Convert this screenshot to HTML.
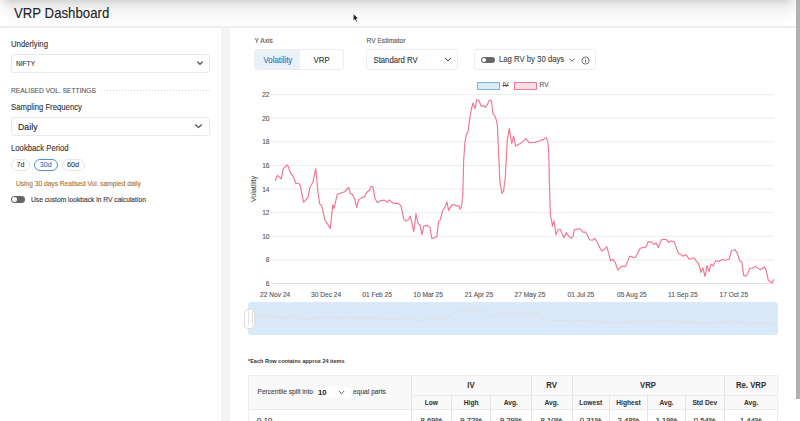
<!DOCTYPE html>
<html><head><meta charset="utf-8"><title>VRP Dashboard</title>
<style>
*{box-sizing:border-box;margin:0;padding:0}
html,body{width:800px;height:421px;overflow:hidden;background:#fff}
body{font-family:"Liberation Sans",sans-serif;color:#333;position:relative;-webkit-text-stroke:0.1px currentColor}
.a{position:absolute;white-space:nowrap}
#hdr{position:absolute;left:0;top:0;width:796px;height:27.5px;background:linear-gradient(#d7d7d7 0px,#dcdcdc 1.5px,#e2e2e5 3px,#e9e9e9 5px,#f0f0f0 8px,#f6f6f6 12px,#fbfbfb 17px,#fdfdfd 22px,#fdfdfd 25px);border-bottom:2px solid #ededed}
#vig{position:absolute;left:0;top:0;width:796px;height:26px;background:radial-gradient(ellipse 14px 24px at 0 26px,rgba(255,255,255,0.95),rgba(255,255,255,0) 100%),linear-gradient(to right,rgba(255,255,255,0.7),rgba(255,255,255,0) 10px,rgba(255,255,255,0) 784px,rgba(255,255,255,0.6))}
#title{left:14px;top:4.6px;font-size:13.22px;color:#222;transform:scaleY(1.075);transform-origin:0 0}
#gutter{position:absolute;left:221px;top:27px;width:8.5px;height:394px;background:#f3f3f3}
#sb{position:absolute;left:796px;top:0;width:4px;height:399px;background:#b1b1b1}
.lbl{font-size:7.74px;color:#333;transform:scaleY(1.05);transform-origin:0 72%}
.sel{position:absolute;border:1px solid #e9e9e9;border-radius:3px;background:#fff}
.chev{position:absolute}
.chip{position:absolute;border:1px solid #e6e6e6;border-radius:7px;font-size:7.2px;color:#333;text-align:center;line-height:10.5px;height:12px}
.yl{position:absolute;left:252px;width:17.5px;text-align:right;font-size:6.6px;color:#555;line-height:9px;transform:scaleY(1.05);transform-origin:0 72%}
.xl{position:absolute;top:289.5px;width:60px;text-align:center;font-size:6.62px;color:#555;line-height:9px;transform:scaleY(1.05);transform-origin:0 72%}
table{position:absolute;left:248px;top:375px;width:530px;border-collapse:collapse;font-size:6.6px}
td,th{border:1px solid #ebebeb}
th{background:#f9f9f9;font-weight:700;color:#333}
</style></head><body>
<div id="hdr"></div><div id="vig"></div>
<div class="a" id="title">VRP Dashboard</div>
<div id="sb"></div>
<div id="gutter"></div>

<!-- sidebar -->
<div class="a lbl" style="left:11px;top:39.6px">Underlying</div>
<div class="sel" style="left:11px;top:54px;width:199px;height:19px"></div>
<div class="a" style="left:16px;top:59.5px;font-size:6.6px;color:#333;transform:scaleY(1.05);transform-origin:0 72%">NIFTY</div>
<svg class="chev" style="left:196px;top:60px" width="8" height="6" viewBox="0 0 8 6"><path d="M1.2 1.6 L4 4.3 L6.8 1.6" fill="none" stroke="#555" stroke-width="1.3"/></svg>
<div class="a" style="left:11px;top:86.5px;font-size:6.65px;color:#555;transform:scaleY(1.05);transform-origin:0 72%">REALISED VOL. SETTINGS</div>
<div class="a" style="left:100.5px;top:89.5px;width:109px;height:1px;background:repeating-linear-gradient(to right,#d4d4d4 0,#d4d4d4 1px,transparent 1px,transparent 3px)"></div>
<div class="a lbl" style="left:11px;top:102.5px">Sampling Frequency</div>
<div class="sel" style="left:11px;top:117px;width:199px;height:19px"></div>
<div class="a" style="left:18px;top:121.5px;font-size:8.8px;color:#222;transform:scaleY(1.05);transform-origin:0 72%">Daily</div>
<svg class="chev" style="left:194px;top:123px" width="9" height="6" viewBox="0 0 9 6"><path d="M1.2 1.4 L4.5 4.4 L7.8 1.4" fill="none" stroke="#555" stroke-width="1.3"/></svg>
<div class="a lbl" style="left:11px;top:143.5px">Lookback Period</div>
<div class="chip" style="left:11px;top:158.5px;width:19px">7d</div>
<div class="chip" style="left:34px;top:158.5px;width:23.5px;border-color:#4a8fd8;color:#2f6fc0">30d</div>
<div class="chip" style="left:61.5px;top:158.5px;width:23px">60d</div>
<div class="a" style="left:16px;top:179.8px;font-size:6.63px;color:#a86f2c;transform:scaleY(1.05);transform-origin:0 72%">Using 30 days Realised Vol. sampled daily</div>
<div class="a" style="left:11px;top:196px;width:13.5px;height:7px;border-radius:4px;background:#666"></div>
<div class="a" style="left:12.2px;top:197.2px;width:4.6px;height:4.6px;border-radius:50%;background:#fff"></div>
<div class="a" style="left:31px;top:195.7px;font-size:6.68px;color:#333;transform:scaleY(1.05);transform-origin:0 72%">Use custom lookback in RV calculation</div>

<!-- controls -->
<div class="a" style="left:254.5px;top:36.5px;font-size:6.64px;color:#555;transform:scaleY(1.05);transform-origin:0 72%">Y Axis</div>
<div class="sel" style="left:254px;top:49px;width:90px;height:21px;border-color:#ececec"></div>
<div class="a" style="left:255px;top:50px;width:45px;height:19px;background:#eaf1f9;border-radius:2px 0 0 2px"></div>
<div class="a" style="left:263.5px;top:55.5px;font-size:7.85px;color:#2f6fc0;transform:scaleY(1.05);transform-origin:0 72%">Volatility</div>
<div class="a" style="left:313.5px;top:55.5px;font-size:7.85px;color:#333;transform:scaleY(1.05);transform-origin:0 72%">VRP</div>
<div class="a" style="left:366.5px;top:36.5px;font-size:6.64px;color:#555;transform:scaleY(1.05);transform-origin:0 72%">RV Estimator</div>
<div class="sel" style="left:366px;top:49px;width:92px;height:21px;border-color:#ececec"></div>
<div class="a" style="left:373.5px;top:55.5px;font-size:7.74px;color:#333;transform:scaleY(1.05);transform-origin:0 72%">Standard RV</div>
<svg class="chev" style="left:444px;top:57px" width="8" height="5" viewBox="0 0 8 5"><path d="M1 1 L4 4 L7 1" fill="none" stroke="#444" stroke-width="1"/></svg>
<div class="sel" style="left:474px;top:49.3px;width:122px;height:21px;border-color:#ececec"></div>
<div class="a" style="left:481px;top:57px;width:13.5px;height:6px;border-radius:3px;background:#666"></div>
<div class="a" style="left:482px;top:58px;width:4px;height:4px;border-radius:50%;background:#fff"></div>
<div class="a" style="left:499px;top:55.3px;font-size:7.74px;color:#444;transform:scaleY(1.05);transform-origin:0 72%">Lag RV by 30 days</div>
<svg class="chev" style="left:568.5px;top:57.5px" width="6" height="4" viewBox="0 0 6 4"><path d="M0.5 0.8 L3 3.2 L5.5 0.8" fill="none" stroke="#444" stroke-width="0.9"/></svg>
<svg class="chev" style="left:580.5px;top:55.5px" width="9" height="9" viewBox="0 0 9 9"><circle cx="4.5" cy="4.5" r="3.6" fill="none" stroke="#555" stroke-width="0.8"/><line x1="4.5" y1="3.9" x2="4.5" y2="6.5" stroke="#555" stroke-width="0.9"/><circle cx="4.5" cy="2.7" r="0.5" fill="#555"/></svg>

<!-- legend -->
<div class="a" style="left:477px;top:82px;width:23px;height:7.5px;border:1px solid #79b6dc;background:#dbeaf7"></div>
<div class="a" style="left:502.5px;top:80.5px;font-size:6.6px;color:#555;text-decoration:line-through;transform:scaleY(1.05);transform-origin:0 72%">IV</div>
<div class="a" style="left:513.5px;top:82px;width:23.5px;height:7.5px;border:1px solid #f27a95;background:#fde0e7"></div>
<div class="a" style="left:539.5px;top:80.5px;font-size:6.6px;color:#555;transform:scaleY(1.05);transform-origin:0 72%">RV</div>

<!-- chart -->
<svg class="a" style="left:0;top:0" width="800" height="421">
<line x1="271" y1="94.60" x2="774" y2="94.60" stroke="#ececec" stroke-width="1"/><line x1="271" y1="118.21" x2="774" y2="118.21" stroke="#ececec" stroke-width="1"/><line x1="271" y1="141.82" x2="774" y2="141.82" stroke="#ececec" stroke-width="1"/><line x1="271" y1="165.44" x2="774" y2="165.44" stroke="#ececec" stroke-width="1"/><line x1="271" y1="189.05" x2="774" y2="189.05" stroke="#ececec" stroke-width="1"/><line x1="271" y1="212.66" x2="774" y2="212.66" stroke="#ececec" stroke-width="1"/><line x1="271" y1="236.28" x2="774" y2="236.28" stroke="#ececec" stroke-width="1"/><line x1="271" y1="259.89" x2="774" y2="259.89" stroke="#ececec" stroke-width="1"/><line x1="271" y1="283.50" x2="275" y2="283.50" stroke="#ececec" stroke-width="1"/><line x1="275" y1="283.50" x2="774" y2="283.50" stroke="#dcdce2" stroke-width="1"/>
<polyline points="275.3,180.7 277.4,175.4 279.1,177 281.2,178.8 283.2,168.8 286.9,165 287.8,165.5 290.2,172.1 291.6,174.5 293.5,176.7 295.9,183.5 298.7,183.5 300.2,185.4 303.6,202.3 307.9,197.3 309.9,187.3 312.9,182.3 315.8,168.6 317.8,191 319.8,204.2 321.6,205.2 324.8,219.7 330.3,228.4 332.8,204.8 334,208.5 337.3,194.3 342.8,192.3 344.5,192 348.7,187.4 350.5,193.7 352.5,194.4 354.5,198.7 356.7,207.4 358.7,199.9 361.2,197.9 364.4,196.9 366.9,191.9 369.4,190.4 371.2,186.2 372.9,186.2 374.9,198.7 377.4,202.4 381.1,200.4 384.9,200.4 387.4,202.4 389.3,199.9 392.3,202.9 398.6,203.6 401.1,206.1 403.6,218.6 406,221.1 408.5,219.8 410.3,216.1 413.8,231.8 416,213.6 418,223.6 420,224.9 422,234.8 423.7,226.1 427.4,225.4 429.9,227.4 431.9,238.6 434.9,237.8 436.9,236.1 438.7,221.1 440.4,219.9 442.4,211.2 444.9,207.4 446.9,201.9 448.6,210.4 451.9,204.9 454.9,204.9 456.9,206.2 458.6,205.7 460.3,209.2 461.8,204.9 462.8,195 463.7,159.8 465,142.3 466.2,134.9 468,131.9 469.5,119.9 471.2,109.9 473,103 475,108.7 476.9,99.5 478.9,100.5 481.2,106.2 482.9,105.5 484.9,107.4 486.9,105.5 489.4,100 491.4,100.5 492.9,113.7 494.4,114.9 496.1,119.4 497.4,124.9 498.6,152.3 499.9,182.2 501.9,193.4 503.6,190.9 505.3,177.2 507.3,139.8 509.3,128.6 511.8,143.6 513.6,136.1 515.6,146.1 520.3,143.6 526,138.6 529.3,142.8 535,142.4 538.7,141.2 542,139.9 543.7,139.4 546.2,137.4 547.9,142.4 548.7,152.4 549.4,182.3 550.3,214 552.6,226.4 554.1,220.7 556,234.9 558.3,229.2 560.2,229.2 564,237.8 566.3,232.6 568.8,236.4 571.2,238.3 573.1,235.9 574.5,229.6 577.3,229.2 580.2,228.8 583,232.1 585.3,232.1 586.8,234 589.7,239.7 592.5,240.2 594.8,238.3 597.3,242.5 601.6,251.1 604.9,249.2 606.8,246.7 610.6,260.6 613,259.6 615.3,262.5 617.8,270.1 621,266.8 622.1,266.4 625.7,266.4 629.7,256.4 631.4,256.4 633.5,257.5 635.7,257.1 640,248.5 642.8,247.5 646,247.1 648.2,241.8 651.7,242.1 654.2,244.7 655.9,242.8 658.2,247.5 661.4,240 663.5,239.3 666.3,239.5 668.8,242.4 670.6,241 674.2,241.8 678.2,252.8 682.7,256.1 685.9,254.7 689.2,259.2 694.2,257.8 696.4,261.4 698.6,263.5 701,272.5 702.8,267.8 705,276.3 707.1,265.4 709,271.6 711,264.2 713.3,265.9 715.7,260.7 719.2,261.4 722.8,259.2 725,260.2 729.2,259.2 731.4,250.7 734.9,249.7 737.1,252.8 739.9,261.1 741.8,261.7 743.8,275.6 746.1,275.9 747.8,273.5 749.9,268.2 752,268.2 755.6,266.4 759.9,269.6 762.3,268.8 764.4,266.8 766.3,270.6 768.4,280.6 772,282.8 774,279.4" fill="none" stroke="#f37490" stroke-width="1.15" stroke-linejoin="round"/>
</svg>
<div class="yl" style="top:90.10px">22</div><div class="yl" style="top:113.71px">20</div><div class="yl" style="top:137.32px">18</div><div class="yl" style="top:160.94px">16</div><div class="yl" style="top:184.55px">14</div><div class="yl" style="top:208.16px">12</div><div class="yl" style="top:231.78px">10</div><div class="yl" style="top:255.39px">8</div><div class="yl" style="top:279.00px">6</div>
<div class="xl" style="left:245.2px">22 Nov 24</div><div class="xl" style="left:296.1px">30 Dec 24</div><div class="xl" style="left:347.1px">01 Feb 25</div><div class="xl" style="left:398.1px">10 Mar 25</div><div class="xl" style="left:449.0px">21 Apr 25</div><div class="xl" style="left:500.0px">27 May 25</div><div class="xl" style="left:550.9px">01 Jul 25</div><div class="xl" style="left:601.9px">05 Aug 25</div><div class="xl" style="left:652.8px">11 Sep 25</div><div class="xl" style="left:703.8px">17 Oct 25</div>
<div class="a" style="left:254.1px;top:189.1px;font-size:7.1px;color:#555;transform:translate(-50%,-50%) rotate(-90deg);transform-origin:50% 50%">Volatility</div>

<!-- navigator -->
<div class="a" style="left:248px;top:302px;width:530px;height:33px;background:#d9e9f9;border-radius:3px"></div>
<svg class="a" style="left:0;top:0" width="800" height="421"><polyline points="251.0,316.37 252.6,316.13 254.2,316.00 255.7,316.11 257.3,316.21 258.9,315.72 260.5,315.39 262.1,315.28 263.7,315.17 265.2,315.35 266.8,315.67 268.4,315.88 270.0,316.02 271.6,316.28 273.2,316.58 274.7,316.58 276.3,316.61 277.9,316.84 279.5,317.41 281.1,317.98 282.6,317.89 284.2,317.76 285.8,317.60 287.4,317.02 289.0,316.73 290.6,316.54 292.1,316.09 293.7,315.55 295.3,316.47 296.9,317.51 298.5,318.17 300.1,318.23 301.6,318.72 303.2,319.24 304.8,319.49 306.4,319.67 308.0,319.85 309.6,319.87 311.1,318.78 312.7,318.37 314.3,318.16 315.9,317.67 317.5,317.39 319.0,317.34 320.6,317.30 322.2,317.26 323.8,317.24 325.4,317.15 327.0,317.02 328.5,316.89 330.1,317.22 331.7,317.39 333.3,317.49 334.9,317.74 336.5,318.19 338.0,318.18 339.6,317.81 341.2,317.72 342.8,317.66 344.4,317.62 345.9,317.51 347.5,317.28 349.1,317.17 350.7,317.09 352.3,316.82 353.9,316.79 355.4,317.31 357.0,317.81 358.6,317.98 360.2,317.98 361.8,317.92 363.4,317.87 364.9,317.87 366.5,317.87 368.1,317.94 369.7,318.01 371.3,317.86 372.9,317.92 374.4,318.04 376.0,318.07 377.6,318.08 379.2,318.10 380.8,318.11 382.3,318.18 383.9,318.30 385.5,318.84 387.1,319.29 388.7,319.41 390.3,319.41 391.8,319.35 393.4,319.12 395.0,319.48 396.6,320.00 398.2,319.83 399.8,318.88 401.3,319.45 402.9,319.69 404.5,319.93 406.1,320.50 407.7,319.91 409.2,319.82 410.8,319.79 412.4,319.82 414.0,319.91 415.6,320.40 417.2,320.78 418.7,320.75 420.3,320.69 421.9,320.53 423.5,319.58 425.1,319.38 426.7,318.99 428.2,318.63 429.8,318.45 431.4,318.17 433.0,318.21 434.6,318.58 436.2,318.39 437.7,318.21 439.3,318.21 440.9,318.22 442.5,318.29 444.1,318.29 445.6,318.42 447.2,318.39 448.8,317.68 450.4,314.46 452.0,313.20 453.6,312.76 455.1,312.33 456.7,311.50 458.3,310.87 459.9,310.43 461.5,310.76 463.1,310.49 464.6,310.18 466.2,310.26 467.8,310.54 469.4,310.65 471.0,310.66 472.5,310.76 474.1,310.65 475.7,310.44 477.3,310.20 478.9,310.23 480.5,310.98 482.0,311.31 483.6,311.56 485.2,311.97 486.8,314.02 488.4,316.52 490.0,317.16 491.5,317.21 493.1,316.59 494.7,315.10 496.3,313.16 497.9,312.51 499.5,312.94 501.0,313.47 502.6,312.99 504.2,313.49 505.8,313.69 507.4,313.62 508.9,313.56 510.5,313.48 512.1,313.38 513.7,313.28 515.3,313.18 516.9,313.25 518.4,313.39 520.0,313.47 521.6,313.46 523.2,313.45 524.8,313.44 526.4,313.41 527.9,313.38 529.5,313.34 531.1,313.29 532.7,313.25 534.3,313.21 535.8,313.13 537.4,313.12 539.0,313.53 540.6,316.76 542.2,319.20 543.8,319.82 545.3,319.45 546.9,320.22 548.5,320.32 550.1,320.07 551.7,320.07 553.3,320.30 554.8,320.56 556.4,320.64 558.0,320.38 559.6,320.47 561.2,320.63 562.8,320.72 564.3,320.69 565.9,320.45 567.5,320.10 569.1,320.08 570.7,320.06 572.2,320.05 573.8,320.11 575.4,320.25 577.0,320.29 578.6,320.31 580.2,320.47 581.7,320.69 583.3,320.88 584.9,320.90 586.5,320.88 588.1,320.79 589.7,320.92 591.2,321.12 592.8,321.35 594.4,321.58 596.0,321.73 597.6,321.66 599.1,321.59 600.7,321.44 602.3,321.74 603.9,322.16 605.5,322.46 607.1,322.41 608.6,322.49 610.2,322.66 611.8,323.01 613.4,323.14 615.0,323.02 616.6,322.93 618.1,322.91 619.7,322.91 621.3,322.86 622.9,322.57 624.5,322.28 626.1,322.15 627.6,322.17 629.2,322.23 630.8,322.21 632.4,322.08 634.0,321.85 635.5,321.62 637.1,321.52 638.7,321.48 640.3,321.46 641.9,321.44 643.5,321.25 645.0,321.04 646.6,321.05 648.2,321.06 649.8,321.16 651.4,321.23 653.0,321.13 654.5,321.36 656.1,321.33 657.7,321.06 659.3,320.88 660.9,320.84 662.5,320.85 664.0,320.88 665.6,321.01 667.2,321.04 668.8,320.98 670.4,321.00 671.9,321.03 673.5,321.31 675.1,321.62 676.7,321.89 678.3,321.97 679.9,322.06 681.4,322.12 683.0,322.07 684.6,322.03 686.2,322.19 687.8,322.34 689.4,322.34 690.9,322.30 692.5,322.27 694.1,322.36 695.7,322.54 697.3,322.65 698.8,322.95 700.4,323.38 702.0,323.08 703.6,323.37 705.2,323.47 706.8,322.88 708.3,323.19 709.9,323.03 711.5,322.77 713.1,322.86 714.7,322.68 716.3,322.48 717.8,322.50 719.4,322.53 721.0,322.47 722.6,322.40 724.2,322.39 725.8,322.44 727.3,322.41 728.9,322.38 730.5,322.27 732.1,321.83 733.7,321.69 735.2,321.66 736.8,321.70 738.4,321.86 740.0,322.19 741.6,322.51 743.2,322.55 744.7,323.19 746.3,323.62 747.9,323.64 749.5,323.49 751.1,323.22 752.7,323.05 754.2,323.05 755.8,322.99 757.4,322.94 759.0,322.96 760.6,323.05 762.1,323.13 763.7,323.13 765.3,323.08 766.9,322.97 768.5,323.11 770.1,323.49 771.6,324.00 773.2,324.07 774.8,324.14 776.4,324.04" fill="none" stroke="#e6d9d5" stroke-width="0.75"/></svg>
<div class="a" style="left:244.3px;top:308.5px;width:11px;height:20px;border:1px solid #dedede;border-radius:4px;background:#fff"></div>
<div class="a" style="left:248.1px;top:311px;width:1px;height:15px;background:#e2e2e2"></div>
<div class="a" style="left:251.9px;top:311px;width:1px;height:15px;background:#e2e2e2"></div>

<div class="a" style="left:248px;top:357.5px;font-size:5.54px;font-weight:700;color:#333;-webkit-text-stroke:0;transform:scaleY(1.05);transform-origin:0 72%">*Each Row contains approx 24 items</div>

<div class="a" style="left:248px;top:375px;width:530px;height:46px;border:1px solid #eeeeee;border-bottom:none;background:#fff"></div>
<div class="a" style="left:249px;top:376px;width:528px;height:33.5px;background:#f9f9f9"></div>
<div class="a" style="left:249px;top:409px;width:528px;height:1px;background:#ebebeb"></div><div class="a" style="left:411px;top:395px;width:366px;height:1px;background:#ebebeb"></div><div class="a" style="left:410.5px;top:376px;width:1px;height:45px;background:#e6e6e6"></div><div class="a" style="left:451.25px;top:395px;width:1px;height:26px;background:#e6e6e6"></div><div class="a" style="left:490.2px;top:395px;width:1px;height:26px;background:#e6e6e6"></div><div class="a" style="left:530.5px;top:376px;width:1px;height:45px;background:#e6e6e6"></div><div class="a" style="left:571.5px;top:376px;width:1px;height:45px;background:#e6e6e6"></div><div class="a" style="left:608.9px;top:395px;width:1px;height:26px;background:#e6e6e6"></div><div class="a" style="left:647.1px;top:395px;width:1px;height:26px;background:#e6e6e6"></div><div class="a" style="left:685.0px;top:395px;width:1px;height:26px;background:#e6e6e6"></div><div class="a" style="left:723.5px;top:376px;width:1px;height:45px;background:#e6e6e6"></div><div class="a" style="left:411px;top:380.5px;width:120px;text-align:center;font-size:7.78px;font-weight:700;color:#333;-webkit-text-stroke:0.05px #333;transform:scaleY(1.05);transform-origin:0 72%">IV</div><div class="a" style="left:531px;top:380.5px;width:41px;text-align:center;font-size:7.78px;font-weight:700;color:#333;-webkit-text-stroke:0.05px #333;transform:scaleY(1.05);transform-origin:0 72%">RV</div><div class="a" style="left:572px;top:380.5px;width:152px;text-align:center;font-size:7.78px;font-weight:700;color:#333;-webkit-text-stroke:0.05px #333;transform:scaleY(1.05);transform-origin:0 72%">VRP</div><div class="a" style="left:724px;top:380.5px;width:54px;text-align:center;font-size:7.78px;font-weight:700;color:#333;-webkit-text-stroke:0.05px #333;transform:scaleY(1.05);transform-origin:0 72%">Re. VRP</div><div class="a" style="left:411px;top:399px;width:40.75px;text-align:center;font-size:6.65px;font-weight:700;color:#333;-webkit-text-stroke:0.05px #333;transform:scaleY(1.05);transform-origin:0 72%">Low</div><div class="a" style="left:451.75px;top:399px;width:38.94999999999999px;text-align:center;font-size:6.65px;font-weight:700;color:#333;-webkit-text-stroke:0.05px #333;transform:scaleY(1.05);transform-origin:0 72%">High</div><div class="a" style="left:490.7px;top:399px;width:40.30000000000001px;text-align:center;font-size:6.65px;font-weight:700;color:#333;-webkit-text-stroke:0.05px #333;transform:scaleY(1.05);transform-origin:0 72%">Avg.</div><div class="a" style="left:531px;top:399px;width:41px;text-align:center;font-size:6.65px;font-weight:700;color:#333;-webkit-text-stroke:0.05px #333;transform:scaleY(1.05);transform-origin:0 72%">Avg.</div><div class="a" style="left:572px;top:399px;width:37.39999999999998px;text-align:center;font-size:6.65px;font-weight:700;color:#333;-webkit-text-stroke:0.05px #333;transform:scaleY(1.05);transform-origin:0 72%">Lowest</div><div class="a" style="left:609.4px;top:399px;width:38.200000000000045px;text-align:center;font-size:6.65px;font-weight:700;color:#333;-webkit-text-stroke:0.05px #333;transform:scaleY(1.05);transform-origin:0 72%">Highest</div><div class="a" style="left:647.6px;top:399px;width:37.89999999999998px;text-align:center;font-size:6.65px;font-weight:700;color:#333;-webkit-text-stroke:0.05px #333;transform:scaleY(1.05);transform-origin:0 72%">Avg.</div><div class="a" style="left:685.5px;top:399px;width:38.5px;text-align:center;font-size:6.65px;font-weight:700;color:#333;-webkit-text-stroke:0.05px #333;transform:scaleY(1.05);transform-origin:0 72%">Std Dev</div><div class="a" style="left:724px;top:399px;width:54px;text-align:center;font-size:6.65px;font-weight:700;color:#333;-webkit-text-stroke:0.05px #333;transform:scaleY(1.05);transform-origin:0 72%">Avg.</div><div class="a" style="left:411px;top:415.7px;width:40.75px;text-align:center;font-size:7.7px;font-weight:400;color:#333;-webkit-text-stroke:0.15px #333;transform:scaleY(1.05);transform-origin:0 72%">8.69%</div><div class="a" style="left:451.75px;top:415.7px;width:38.94999999999999px;text-align:center;font-size:7.7px;font-weight:400;color:#333;-webkit-text-stroke:0.15px #333;transform:scaleY(1.05);transform-origin:0 72%">9.72%</div><div class="a" style="left:490.7px;top:415.7px;width:40.30000000000001px;text-align:center;font-size:7.7px;font-weight:400;color:#333;-webkit-text-stroke:0.15px #333;transform:scaleY(1.05);transform-origin:0 72%">9.29%</div><div class="a" style="left:531px;top:415.7px;width:41px;text-align:center;font-size:7.7px;font-weight:400;color:#333;-webkit-text-stroke:0.15px #333;transform:scaleY(1.05);transform-origin:0 72%">8.10%</div><div class="a" style="left:572px;top:415.7px;width:37.39999999999998px;text-align:center;font-size:7.7px;font-weight:400;color:#333;-webkit-text-stroke:0.15px #333;transform:scaleY(1.05);transform-origin:0 72%">0.31%</div><div class="a" style="left:609.4px;top:415.7px;width:38.200000000000045px;text-align:center;font-size:7.7px;font-weight:400;color:#333;-webkit-text-stroke:0.15px #333;transform:scaleY(1.05);transform-origin:0 72%">2.48%</div><div class="a" style="left:647.6px;top:415.7px;width:37.89999999999998px;text-align:center;font-size:7.7px;font-weight:400;color:#333;-webkit-text-stroke:0.15px #333;transform:scaleY(1.05);transform-origin:0 72%">1.19%</div><div class="a" style="left:685.5px;top:415.7px;width:38.5px;text-align:center;font-size:7.7px;font-weight:400;color:#333;-webkit-text-stroke:0.15px #333;transform:scaleY(1.05);transform-origin:0 72%">0.54%</div><div class="a" style="left:724px;top:415.7px;width:54px;text-align:center;font-size:7.7px;font-weight:400;color:#333;-webkit-text-stroke:0.15px #333;transform:scaleY(1.05);transform-origin:0 72%">1.44%</div><div class="a" style="left:257px;top:415.7px;font-size:7.7px;color:#333;transform:scaleY(1.05);transform-origin:0 72%">0-10</div><div class="a" style="left:257.5px;top:388.3px;font-size:6.61px;color:#444;transform:scaleY(1.05);transform-origin:0 72%">Percentile split into</div><div class="a" style="left:316px;top:387px;width:35px;height:11px;background:#fff;border-radius:2px"></div><div class="a" style="left:318px;top:388px;font-size:7.7px;font-weight:700;color:#222;-webkit-text-stroke:0;transform:scaleY(1.05);transform-origin:0 72%">10</div><svg class="a" style="left:338px;top:390px" width="7" height="5" viewBox="0 0 7 5"><path d="M0.8 1 L3.5 3.7 L6.2 1" fill="none" stroke="#444" stroke-width="0.9"/></svg><div class="a" style="left:353px;top:388.3px;font-size:6.67px;color:#444;transform:scaleY(1.05);transform-origin:0 72%">equal parts</div>
<svg class="a" style="left:0;top:0" width="800" height="40"><path d="M353.2,13.6 L353.2,20.9 L354.9,19.4 L356.1,22.1 L357.4,21.5 L356.3,18.9 L358.5,18.8 Z" fill="#1a1a1a" stroke="#fff" stroke-width="0.7" stroke-linejoin="round"/></svg>
</body></html>
